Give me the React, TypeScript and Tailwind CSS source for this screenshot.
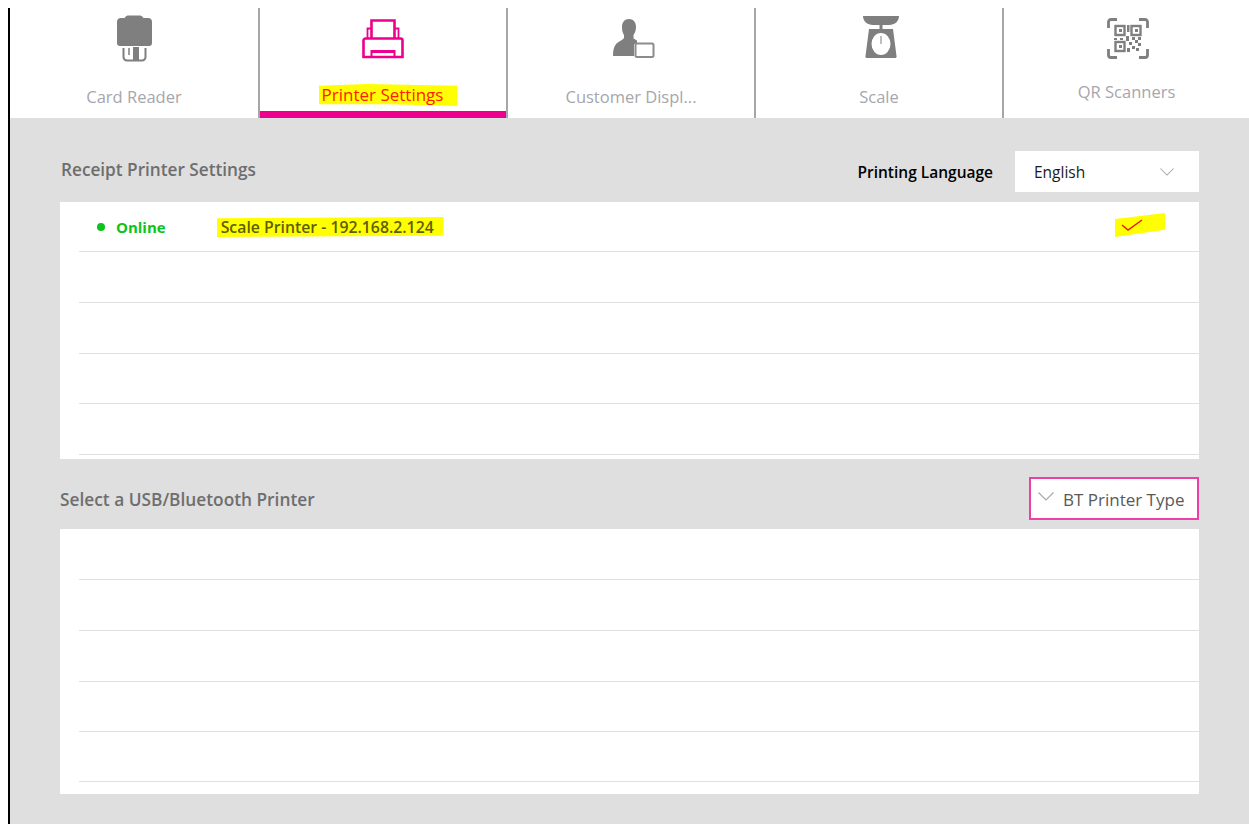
import React from "react";

const FONT = "font-['Open_Sans','Noto_Sans',sans-serif]";

const CardReaderIcon = () => (
  <svg width="37" height="47" viewBox="0 0 37 47" fill="none">
    <path d="M1 7a4 4 0 0 1 4-4h3.500q1-2 3-2.500h13q2 .5 3 2.500H32a4 4 0 0 1 4 4v21a3 3 0 0 1-3 3H4a3 3 0 0 1-3-3z" fill="#7f7f7f" />
    <path d="M7.500 33v9a3.500 3.500 0 0 0 3.500 3.500h15a3.500 3.500 0 0 0 3.500-3.500v-9" stroke="#7f7f7f" strokeWidth="2" />
    <path d="M13 33v7" stroke="#7f7f7f" strokeWidth="1.500" />
    <path d="M17 32h6v13h-6z" fill="#7f7f7f" />
  </svg>
);

const PrinterIcon = () => (
  <svg width="42" height="40" viewBox="0 0 42 40" fill="none" stroke="#ec008c" strokeWidth="2.600">
    <path d="M9.500 20V1.500h23V20" />
    <path d="M9.500 9.500H5.500V20M32.500 9.500h4V20" strokeWidth="1.800" />
    <path d="M1.500 21.500a2 2 0 0 1 2-2h35a2 2 0 0 1 2 2v16.500h-39z" />
    <path d="M9.500 38v-6h23v6M9.500 33h23" strokeWidth="2" />
  </svg>
);

const CustomerIcon = () => (
  <svg width="42" height="39" viewBox="0 0 42 39" fill="none">
    <path d="M16 0c4.500 0 7 3.500 7 8 0 3-1 6-2.500 8v3.500l3.500 2V25h-3v12H0c0-6 1-10 3.500-12.500 2.500-2.500 6-3 7.500-5.500v-3C9.500 14 9 11 9 8c0-4.500 2.500-8 7-8z" fill="#7f7f7f" />
    <rect x="22.500" y="24.500" width="18" height="13.500" rx="1.500" fill="#fff" stroke="#8c8c8c" strokeWidth="2" />
  </svg>
);

const ScaleIcon = () => (
  <svg width="36" height="43" viewBox="0 0 36 43" fill="none">
    <path d="M0 1h36c0 5-4 9-10 9H10C4 10 0 6 0 1z" fill="#7f7f7f" />
    <path d="M16.500 10h3v4h-3z" fill="#7f7f7f" />
    <path d="M6 14h24l3.500 27a1.500 1.500 0 0 1-1.500 2H4a1.500 1.500 0 0 1-1.500-2z" fill="#7f7f7f" />
    <ellipse cx="18" cy="29" rx="9.500" ry="11" fill="#fff" />
    <path d="M18 21v8" stroke="#7f7f7f" strokeWidth="1" />
  </svg>
);

const QrIcon = () => (
  <svg width="42" height="41" viewBox="0 0 42 41" fill="none">
    <g stroke="#7f7f7f" strokeWidth="2.800">
      <path d="M10 1.500H4A2.500 2.500 0 0 0 1.500 4v6" />
      <path d="M32 1.500h6A2.500 2.500 0 0 1 40.500 4v6" />
      <path d="M1.500 31v6A2.500 2.500 0 0 0 4 39.500h6" />
      <path d="M40.500 31v6a2.500 2.500 0 0 1-2.500 2.500h-6" />
      <rect x="8.500" y="8" width="9" height="9" strokeWidth="2.400" />
      <rect x="24.500" y="8" width="9" height="9" strokeWidth="2.400" />
      <rect x="8.500" y="24" width="9" height="9" strokeWidth="2.400" />
    </g>
    <g fill="#7f7f7f">
      <rect x="12" y="11" width="3" height="3" />
      <rect x="28" y="11" width="3" height="3" />
      <rect x="12" y="27" width="3" height="3" />
      <rect x="20" y="7" width="2.500" height="7" />
      <rect x="7" y="20" width="3" height="2" />
      <rect x="13" y="20" width="3" height="2" />
      <rect x="19" y="18" width="3" height="5" />
      <rect x="25" y="19" width="3" height="3" />
      <rect x="31" y="19" width="3" height="3" />
      <rect x="28" y="22" width="3" height="3" />
      <rect x="22" y="24" width="3" height="3" />
      <rect x="31" y="25" width="3" height="3" />
      <rect x="25" y="28" width="3" height="3" />
      <rect x="20" y="30" width="3" height="4" />
      <rect x="29" y="30" width="3" height="3" />
    </g>
  </svg>
);

const Chevron = ({ className }: { className: string }) => (
  <svg className={className} viewBox="0 0 16 9" fill="none" stroke="#a8a8a8" strokeWidth="1.200">
    <path d="M.5.500 8 8 15.500.500" />
  </svg>
);

const lineRows1 = ["h-[50px]", "h-[51px]", "h-[51px]", "h-[50px]", "h-[51px]"];
const lineRows2 = ["h-[51px]", "h-[51px]", "h-[51px]", "h-[50px]", "h-[50px]"];

const TabLabel = ({ children, className }: { children: React.ReactNode; className: string }) => (
  <span className={`text-[16.500px] leading-[22px] text-[#a6a6ad] ${className}`}>{children}</span>
);

export default function App() {
  return (
    <div className={`${FONT} h-[824px] w-full overflow-hidden bg-white`}>
      <div className="h-2" />
      <div className="ml-2 flex h-[816px] flex-col border-l-2 border-black">
        {/* tabs */}
        <div className="flex h-[110px] shrink-0">
          <div className="flex w-[250px] flex-col items-center border-r-2 border-[#a5a5aa]">
            <div className="mt-[7px]">
              <CardReaderIcon />
            </div>
            <TabLabel className="mt-[24px]">Card Reader</TabLabel>
          </div>
          <div className="flex w-[248px] flex-col items-center border-r-2 border-[#a5a5aa]">
            <div className="mt-[11px] h-[40px]">
              <PrinterIcon />
            </div>
            <span className="ml-[10px] mt-[25px] bg-[#ffff00] pl-[3px] pr-[14px] text-[17px] leading-[22px] text-[#ff1a00] [clip-path:polygon(0_8%,35%_0,100%_8%,100%_100%,50%_92%,0_92%)]">
              Printer Settings
            </span>
            <div className="mt-auto h-[7px] w-full bg-[#ec008c]" />
          </div>
          <div className="flex w-[248px] flex-col items-center border-r-2 border-[#a5a5aa]">
            <div className="ml-[6px] mt-[11px]">
              <CustomerIcon />
            </div>
            <TabLabel className="mt-[28px]">Customer Displ...</TabLabel>
          </div>
          <div className="flex w-[248px] flex-col items-center border-r-2 border-[#a5a5aa]">
            <div className="ml-[4px] mt-[7px]">
              <ScaleIcon />
            </div>
            <TabLabel className="mt-[28px]">Scale</TabLabel>
          </div>
          <div className="flex flex-1 flex-col items-center">
            <div className="ml-[2px] mt-[10px]">
              <QrIcon />
            </div>
            <TabLabel className="mt-[22px]">QR Scanners</TabLabel>
          </div>
        </div>

        {/* content */}
        <div className="flex-1 bg-[#dfdfdf] px-[50px] pt-[33px]">
          <div className="flex h-[41px] items-center">
            <span className="mb-[4px] ml-[1px] text-[17.200px] font-semibold text-[#6e6e6e]">Receipt Printer Settings</span>
            <span className="ml-auto mr-[22px] mt-[2px] text-[15.500px] font-semibold text-black">Printing Language</span>
            <div className="flex h-[41px] w-[184px] items-center justify-between bg-white pl-[19px] pr-[25px]">
              <span className="mt-[2px] text-[15.500px] font-medium text-[#1a1a1a]">English</span>
              <Chevron className="h-[8px] w-[14px]" />
            </div>
          </div>

          <div className="mt-[10px] h-[257px] bg-white pl-[19px]">
            {lineRows1.map((h, i) => (
              <div key={i} className={`${h} relative flex items-center border-b border-[#e0e0e0]`}>
                {i === 0 && (
                  <>
                    <span className="ml-[18px] h-2 w-2 rounded-full bg-[#0cc41c]" />
                    <span className="ml-[11px] mt-[1px] text-[15px] font-bold text-[#0cc41c]">Online</span>
                    <span className="ml-[51px] mt-[1px] bg-[#ffff00] pl-[4px] pr-[10px] text-[15.800px] font-semibold leading-[20px] text-[#5e5e00] [clip-path:polygon(0_6%,100%_0,100%_94%,0_100%)]">
                      Scale Printer - 192.168.2.124
                    </span>
                    <div className="ml-auto mr-[34px] mt-[-3px] flex h-[24px] w-[50px] items-center justify-center bg-[#ffff00] pr-[16px] [clip-path:polygon(0_25%,100%_0,100%_70%,0_100%)]">
                      <svg width="22" height="14" viewBox="0 0 22 14" fill="none" stroke="#f01414" strokeWidth="1.500">
                        <path d="M1 7l6 5L21 2" />
                      </svg>
                    </div>
                  </>
                )}
              </div>
            ))}
          </div>

          <div className="mt-[18px] flex h-[43px] items-center justify-between">
            <span className="mt-[2px] text-[17.300px] font-semibold text-[#6e6e6e]">Select a USB/Bluetooth Printer</span>
            <div className="flex h-[43px] w-[170px] items-center border-2 border-[#ee3fa5] bg-white pl-[7px]">
              <Chevron className="mb-[4px] h-[9px] w-[16px]" />
              <span className="ml-[9px] mt-[3px] text-[17px] text-[#595959]">BT Printer Type</span>
            </div>
          </div>

          <div className="mt-[9px] h-[265px] bg-white pl-[19px]">
            {lineRows2.map((h, i) => (
              <div key={i} className={`${h} border-b border-[#e0e0e0]`} />
            ))}
          </div>
        </div>
      </div>
    </div>
  );
}
